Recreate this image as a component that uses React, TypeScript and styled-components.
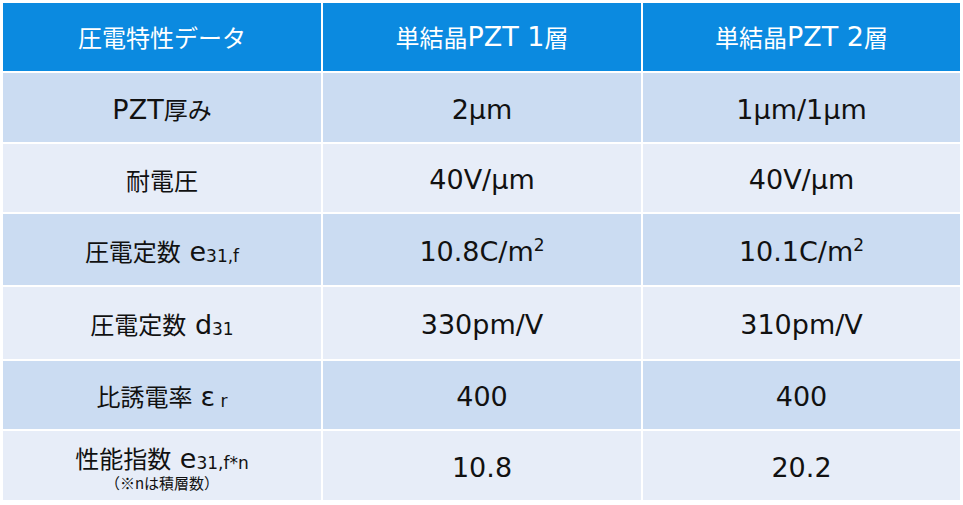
import React from "react";
import styled, { createGlobalStyle } from "styled-components";

const Global = createGlobalStyle`
  html, body { margin: 0; padding: 0; background: #ffffff; }
  body { font-family: "DejaVu Sans", "Noto Sans CJK JP", sans-serif; }
`;

const Table = styled.div`
  display: grid;
  grid-template-columns: 318px 318px 317px;
  grid-template-rows: 68px 69px 68px 71px 72px 68px 69px;
  gap: 2px;
  padding: 3px;
  width: 963px;
  box-sizing: border-box;
`;

const HeaderCell = styled.div`
  background: #0b8ae0;
  color: #ffffff;
  display: flex;
  align-items: center;
  justify-content: center;
  font-size: 27px;
  line-height: 1.2;
  white-space: pre;
`;

const Cell = styled.div<{ $alt?: boolean }>`
  background: ${(p) => (p.$alt ? "#e7edf8" : "#cbdcf2")};
  color: #111111;
  display: flex;
  flex-direction: column;
  align-items: center;
  justify-content: center;
  font-size: 27px;
  line-height: 1.15;
  padding-top: 4px;
  white-space: pre;
`;

const Jp = styled.span`
  font-family: "Noto Sans CJK JP", sans-serif;
  font-size: 24px;
`;

const Sub = styled.span`
  font-size: 17px;
  vertical-align: -1px;
`;

const Sup = styled.span`
  font-size: 17px;
  vertical-align: 10px;
`;

const Note = styled.span`
  font-family: "Noto Sans CJK JP", sans-serif;
  font-size: 15px;
  line-height: 1.25;
`;

const Eps = styled.span`
  margin-left: 8px;
`;

type Row = { label: React.ReactNode; a: React.ReactNode; b: React.ReactNode };

const rows: Row[] = [
  {
    label: (
      <span>
        PZT<Jp>厚み</Jp>
      </span>
    ),
    a: "2μm",
    b: "1μm/1μm",
  },
  { label: <Jp>耐電圧</Jp>, a: "40V/μm", b: "40V/μm" },
  {
    label: (
      <span>
        <Jp>圧電定数</Jp> e<Sub>31,f</Sub>
      </span>
    ),
    a: (
      <span>
        10.8C/m<Sup>2</Sup>
      </span>
    ),
    b: (
      <span>
        10.1C/m<Sup>2</Sup>
      </span>
    ),
  },
  {
    label: (
      <span>
        <Jp>圧電定数</Jp> d<Sub>31</Sub>
      </span>
    ),
    a: "330pm/V",
    b: "310pm/V",
  },
  {
    label: (
      <span>
        <Jp>比誘電率</Jp>
        <Eps>ε</Eps>
        <Sub> r</Sub>
      </span>
    ),
    a: "400",
    b: "400",
  },
  {
    label: (
      <>
        <span>
          <Jp>性能指数</Jp> e<Sub>31,f*n</Sub>
        </span>
        <Note>（※nは積層数）</Note>
      </>
    ),
    a: "10.8",
    b: "20.2",
  },
];

export default function App() {
  return (
    <>
      <Global />
      <Table>
        <HeaderCell>
          <Jp>圧電特性データ</Jp>
        </HeaderCell>
        <HeaderCell>
          <Jp>単結晶</Jp>PZT 1<Jp>層</Jp>
        </HeaderCell>
        <HeaderCell>
          <Jp>単結晶</Jp>PZT 2<Jp>層</Jp>
        </HeaderCell>
        {rows.map((r, i) => (
          <React.Fragment key={i}>
            <Cell $alt={i % 2 === 1}>{r.label}</Cell>
            <Cell $alt={i % 2 === 1}>{r.a}</Cell>
            <Cell $alt={i % 2 === 1}>{r.b}</Cell>
          </React.Fragment>
        ))}
      </Table>
    </>
  );
}
